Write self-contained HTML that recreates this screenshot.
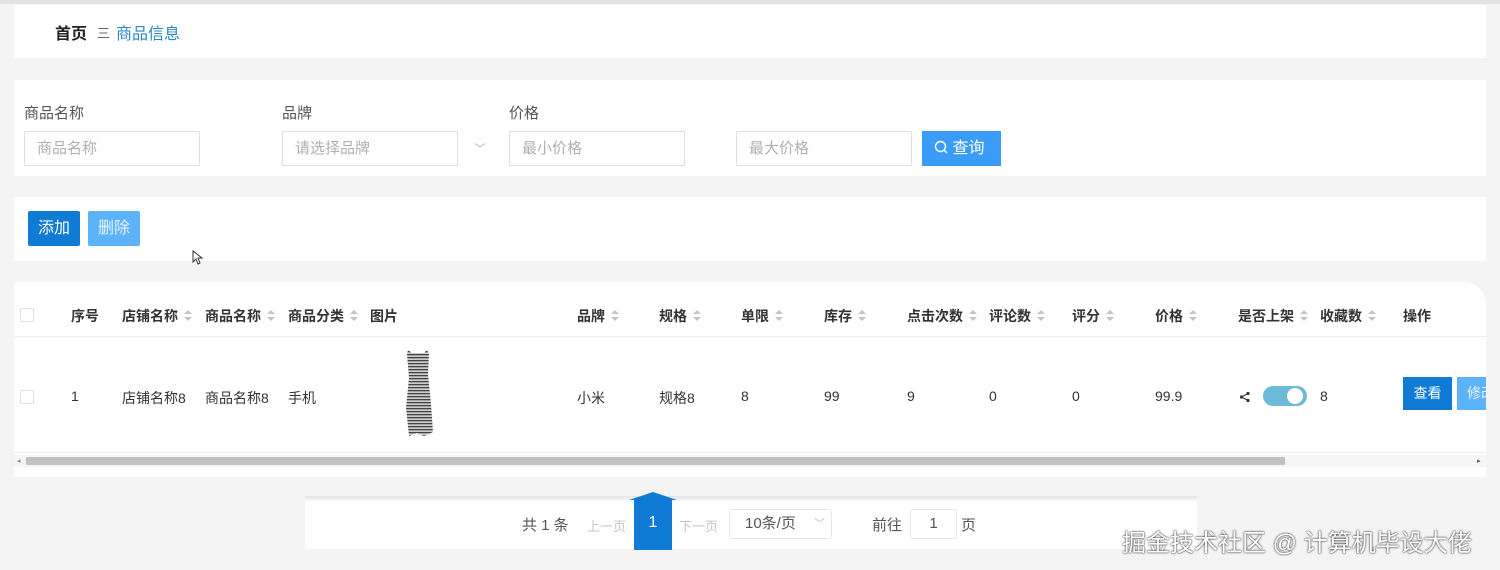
<!DOCTYPE html>
<html><head><meta charset="utf-8"><style>
*{box-sizing:border-box;margin:0;padding:0}
body{width:1500px;height:570px;background:#f4f4f4;font-family:"Liberation Sans","Noto Sans CJK SC",sans-serif;font-size:14px;color:#333;position:relative;overflow:hidden}
.a{position:absolute}
.panel{position:absolute;background:#fff;left:14px;width:1472px}
.inp{position:absolute;height:35px;border:1px solid #dcdfe6;color:#b0b0b0;font-size:15px;padding-left:12px;line-height:33px;background:#fff}
.th{position:absolute;top:306px;font-weight:bold;font-size:14px;color:#333;white-space:nowrap}
.td{position:absolute;top:388px;font-size:14px;color:#333;white-space:nowrap}
.s{display:inline-block;width:8px;height:12px;position:relative;margin-left:6px;vertical-align:-1px}
.s:before{content:"";position:absolute;left:0;top:0;border:4px solid transparent;border-bottom:4px solid #c0c4cc;border-top:0}
.s:after{content:"";position:absolute;left:0;top:7px;border:4px solid transparent;border-top:4px solid #c0c4cc;border-bottom:0}
</style></head><body>
<div class="a" style="left:0;top:0;width:1500px;height:4px;background:#e2e2e2"></div>
<div class="panel" style="top:5px;height:53px"></div>
<div class="a" style="left:55px;top:20px;font-size:16px;font-weight:bold;color:#222">首页</div>
<div class="a" style="left:97px;top:23px;font-size:13px;color:#666">三</div>
<div class="a" style="left:116px;top:20px;font-size:16px;color:#2d86c7">商品信息</div>

<div class="panel" style="top:80px;height:96px"></div>
<div class="a" style="left:24px;top:102px;font-size:15px;color:#555">商品名称</div>
<div class="a" style="left:282px;top:102px;font-size:15px;color:#555">品牌</div>
<div class="a" style="left:509px;top:102px;font-size:15px;color:#555">价格</div>
<div class="inp" style="left:24px;top:131px;width:176px">商品名称</div>
<div class="inp" style="left:282px;top:131px;width:176px">请选择品牌</div>
<div class="a" style="left:474px;top:140px;color:#bbb;font-size:12px">﹀</div>
<div class="inp" style="left:509px;top:131px;width:176px">最小价格</div>
<div class="inp" style="left:736px;top:131px;width:176px">最大价格</div>
<div class="a" style="left:922px;top:131px;width:79px;height:35px;background:#3a9cf6;color:#fff;font-size:16px;line-height:35px;padding-left:12px">
<svg width="14" height="14" viewBox="0 0 14 14" style="vertical-align:-1px"><circle cx="6.5" cy="6.5" r="5" fill="none" stroke="#fff" stroke-width="1.4"/><path d="M10 10l3 3" stroke="#fff" stroke-width="1.4"/></svg> 查询</div>

<div class="panel" style="top:197px;height:64px"></div>
<div class="a" style="left:28px;top:211px;width:52px;height:35px;background:#0f7bd4;color:#fff;border-radius:2px;font-size:16px;line-height:35px;text-align:center">添加</div>
<div class="a" style="left:88px;top:211px;width:52px;height:35px;background:#5cb3f9;color:#e8f4ff;border-radius:2px;font-size:16px;line-height:35px;text-align:center">删除</div>
<svg class="a" style="left:192px;top:250px" width="12" height="16" viewBox="0 0 12 16"><path d="M1 1v11l3-3 2 5 2-1-2-5h4z" fill="#fff" stroke="#333" stroke-width="1"/></svg>

<div class="panel" style="top:282px;height:195px;border-top-right-radius:22px"></div>
<div class="a" style="left:14px;top:336px;width:1472px;height:1px;background:#ebeef5"></div>
<div class="a" style="left:14px;top:452px;width:1472px;height:1px;background:#ebeef5"></div>
<div class="a" style="left:20px;top:308px;width:14px;height:14px;border:1px solid #dcdfe6;border-radius:2px"></div>
<div class="a" style="left:20px;top:390px;width:14px;height:14px;border:1px solid #dcdfe6;border-radius:2px"></div>
<div class="th" style="left:71px">序号</div>
<div class="th" style="left:122px">店铺名称<span class="s"></span></div>
<div class="th" style="left:205px">商品名称<span class="s"></span></div>
<div class="th" style="left:288px">商品分类<span class="s"></span></div>
<div class="th" style="left:370px">图片</div>
<div class="th" style="left:577px">品牌<span class="s"></span></div>
<div class="th" style="left:659px">规格<span class="s"></span></div>
<div class="th" style="left:741px">单限<span class="s"></span></div>
<div class="th" style="left:824px">库存<span class="s"></span></div>
<div class="th" style="left:907px">点击次数<span class="s"></span></div>
<div class="th" style="left:989px">评论数<span class="s"></span></div>
<div class="th" style="left:1072px">评分<span class="s"></span></div>
<div class="th" style="left:1155px">价格<span class="s"></span></div>
<div class="th" style="left:1238px">是否上架<span class="s"></span></div>
<div class="th" style="left:1320px">收藏数<span class="s"></span></div>
<div class="th" style="left:1403px">操作</div>
<div class="td" style="left:71px">1</div>
<div class="td" style="left:122px">店铺名称8</div>
<div class="td" style="left:205px">商品名称8</div>
<div class="td" style="left:288px">手机</div>
<svg class="a" style="left:403px;top:348px" width="40" height="90" viewBox="0 0 40 90">
<defs><pattern id="st" width="3" height="3" patternUnits="userSpaceOnUse"><rect width="3" height="1.4" fill="#444"/><rect y="1.4" width="3" height="1.6" fill="#ccc"/></pattern></defs>
<path d="M5 2l4 3h12l3-3 2 4-1 20 3 30 2 28-9 4-7-3-8 3-3-28 3-30-2-24z" fill="url(#st)"/></svg>
<div class="td" style="left:577px">小米</div>
<div class="td" style="left:659px">规格8</div>
<div class="td" style="left:741px">8</div>
<div class="td" style="left:824px">99</div>
<div class="td" style="left:907px">9</div>
<div class="td" style="left:989px">0</div>
<div class="td" style="left:1072px">0</div>
<div class="td" style="left:1155px">99.9</div>
<svg class="a" style="left:1239px;top:391px" width="12" height="12" viewBox="0 0 12 12"><circle cx="2.5" cy="6" r="1.6" fill="#333"/><circle cx="9" cy="2.5" r="1.6" fill="#333"/><circle cx="9" cy="9.5" r="1.6" fill="#333"/><path d="M2.5 6L9 2.5M2.5 6L9 9.5" stroke="#333" stroke-width="1"/></svg>
<div class="a" style="left:1263px;top:386px;width:44px;height:20px;border-radius:10px;background:#6cb9d8"></div>
<div class="a" style="left:1287px;top:388px;width:16px;height:16px;border-radius:8px;background:#fff"></div>
<div class="td" style="left:1320px">8</div>
<div class="a" style="left:1403px;top:377px;width:49px;height:33px;background:#0f7bd4;color:#fff;font-size:14px;line-height:33px;text-align:center">查看</div>
<div class="a" style="left:1457px;top:377px;width:29px;height:33px;background:#5cb3f9;color:#e8f4ff;font-size:14px;line-height:33px;padding-left:10px;overflow:hidden;white-space:nowrap">修改</div>
<div class="a" style="left:14px;top:455px;width:1472px;height:12px;background:#f6f6f6"></div>
<div class="a" style="left:26px;top:457px;width:1259px;height:8px;background:#c1c1c1;border-radius:1px"></div>
<div class="a" style="left:17px;top:457px;font-size:7px;color:#888">◂</div>
<div class="a" style="left:1477px;top:457px;font-size:7px;color:#555">▸</div>

<div class="a" style="left:305px;top:496px;width:892px;height:5px;background:linear-gradient(#e4e4e4,#f8f8f8)"></div>
<div class="a" style="left:305px;top:501px;width:892px;height:48px;background:#fff"></div>
<div class="a" style="left:522px;top:514px;font-size:15px;color:#555">共 1 条</div>
<div class="a" style="left:587px;top:516px;font-size:13px;color:#c0c4cc">上一页</div>
<div class="a" style="left:634px;top:499px;width:38px;height:51px;background:#0f7bd4"></div>
<div class="a" style="left:629px;top:492px;width:0;height:0;border-left:24px solid transparent;border-right:24px solid transparent;border-bottom:8px solid #0f7bd4"></div>
<div class="a" style="left:634px;top:514px;width:38px;text-align:center;color:#fff;font-size:16px">1</div>
<div class="a" style="left:679px;top:516px;font-size:13px;color:#c0c4cc">下一页</div>
<div class="a" style="left:729px;top:509px;width:103px;height:30px;border:1px solid #e4e7ed;border-radius:3px;font-size:15px;color:#555;line-height:28px;padding-left:15px">10条/页<span style="position:absolute;right:6px;color:#bbb;font-size:11px">﹀</span></div>
<div class="a" style="left:872px;top:514px;font-size:15px;color:#555">前往</div>
<div class="a" style="left:910px;top:509px;width:47px;height:30px;border:1px solid #e4e7ed;border-radius:3px;text-align:center;line-height:28px;font-size:15px;color:#555">1</div>
<div class="a" style="left:961px;top:514px;font-size:15px;color:#555">页</div>
<div class="a" style="left:1122px;top:523px;font-size:24px;color:#fff;text-shadow:0 0 2px #333,0 0 1px #333;white-space:nowrap">掘金技术社区 @ 计算机毕设大佬</div>
</body></html>
